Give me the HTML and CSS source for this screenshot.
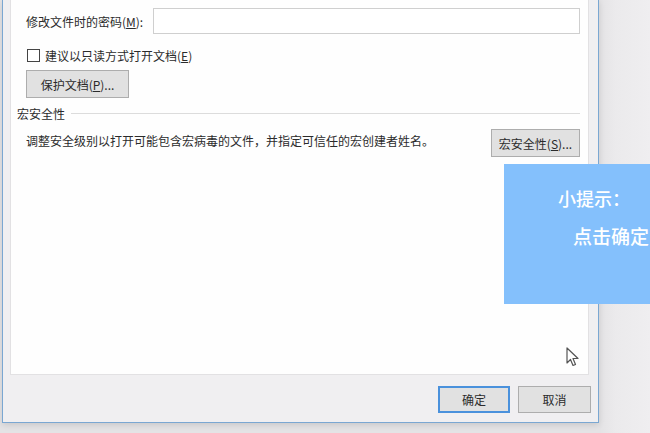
FILE: index.html
```html
<!DOCTYPE html>
<html lang="zh-CN">
<head>
    <meta charset="UTF-8">
    <title>Word 选项 - 常规选项</title>
    <link rel="stylesheet" href="styles.css">
</head>
<body>
    <div class="dialog">
        <div class="panel">
            <div class="row pwd-row">
                <label class="label">修改文件时的密码(<u>M</u>):</label>
                <div class="text-input"></div>
            </div>

            <div class="row check-row">
                <span class="checkbox"></span>
                <span>建议以只读方式打开文档(<u>E</u>)</span>
            </div>

            <button class="btn protect-btn">保护文档(<u>P</u>)...</button>

            <div class="group-title">
                <span>宏安全性</span>
                <span class="group-line"></span>
            </div>

            <div class="row macro-row">
                <span class="macro-desc">调整安全级别以打开可能包含宏病毒的文件，并指定可信任的宏创建者姓名。</span>
                <button class="btn macro-btn">宏安全性(<u>S</u>)...</button>
            </div>
        </div>

        <div class="footer">
            <button class="btn footer-btn default">确定</button>
            <button class="btn footer-btn">取消</button>
        </div>
    </div>

    <!-- 视频里叠加的提示框 -->
    <div class="tip">
        <div class="tip-title">小提示：</div>
        <div class="tip-text">点击确定</div>
    </div>

    <svg class="cursor" width="13" height="20" viewBox="0 0 13 20">
        <path d="M1 1 L1 16 L4.5 12.5 L7 18.5 L9.5 17.5 L7 11.5 L12 11.5 Z" fill="#fff" stroke="#555" stroke-width="1.2" stroke-linejoin="round"/>
    </svg>
</body>
</html>
```

FILE: styles.css
```css
body {
    margin: 0;
    width: 650px;
    height: 433px;
    overflow: hidden;
    position: relative;
    background: linear-gradient(90deg, #e4e3e5 600px, #ebeaec 615px, #efeef0 650px);
    font-family: "Noto Sans CJK SC", "Liberation Sans", sans-serif;
    font-size: 12px;
    color: #2b2b2b;
}
.dialog {
    margin-left: 2px;
    width: 586px;
    height: 422px;
    border: 1px solid #7aa7d2;
    border-top: none;
    background: #f0eff1;
    padding: 0 2px 0 7px;
    box-shadow: 0 2px 6px rgba(0,0,0,0.12);
}
.panel {
    height: 375px;
    background: #fefefe;
    border: 1px solid #e2e1e3;
    border-top: none;
    padding: 8px 0 0 15px;
    box-sizing: border-box;
    width: 579px;
}
.row {
    display: flex;
    align-items: center;
}
.pwd-row {
    height: 26px;
}
.label {
    width: 127px;
}
.text-input {
    width: 425px;
    height: 24px;
    border: 1px solid #cfcfcf;
    background: #fff;
}
.check-row {
    margin-top: 15px;
    height: 13px;
    line-height: 13px;
}
.checkbox {
    width: 11px;
    height: 11px;
    border: 1px solid #444;
    background: #fff;
    margin: 0 5px 0 1px;
}
.btn {
    font-family: inherit;
    font-size: 12px;
    color: #2b2b2b;
    background: #e1e1e1;
    border: 1px solid #adadad;
    padding: 0;
    box-sizing: border-box;
}
.protect-btn {
    display: block;
    margin-top: 8px;
    width: 103px;
    height: 28px;
}
.group-title {
    display: flex;
    align-items: center;
    margin: 7px 0 0 -9px;
    height: 16px;
}
.group-line {
    width: 509px;
    height: 1px;
    background: #dcdcdc;
    margin-left: 6px;
}
.macro-row {
    margin-top: 8px;
    align-items: flex-start;
}
.macro-desc {
    width: 465px;
    margin-top: 3px;
}
.macro-btn {
    width: 89px;
    height: 28px;
}
.footer {
    display: flex;
    justify-content: flex-end;
    gap: 8px;
    padding: 11px 5px 0 0;
}
.footer-btn {
    width: 73px;
    height: 27px;
}
.footer-btn.default {
    width: 72px;
    border: 2px solid #4a91dc;
}
.tip {
    position: absolute;
    left: 504px;
    top: 164px;
    width: 146px;
    height: 140px;
    background: #84c0fc;
    color: #fff;
    font-size: 18px;
    font-weight: 500;
    white-space: nowrap;
}
.tip-title {
    margin: 21px 0 0 54px;
}
.tip-text {
    margin: 11px 0 0 69px;
    font-size: 19px;
}
.cursor {
    position: absolute;
    left: 566px;
    top: 347px;
}
```
